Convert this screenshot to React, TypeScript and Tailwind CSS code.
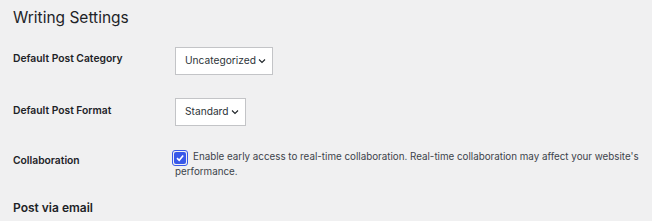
import React from 'react';

const Chevron = () => (
  <svg width="10" height="10" viewBox="0 0 10 10" className="ml-[1px]">
    <path d="M2 3.5 L5 6.5 L8 3.5" fill="none" stroke="#1d2327" strokeWidth="1.1" />
  </svg>
);

const SelectBox = ({ value }: { value: string }) => (
  <div className="inline-flex h-[28px] items-center border border-[#c3c4c7] bg-white pl-[9px] pr-[5px] text-[10.2px] text-[#2c3338]">
    <span>{value}</span>
    <Chevron />
  </div>
);

export default function App() {
  return (
    <div className="h-[221px] w-[652px] overflow-hidden bg-[#f0f0f1] pl-[13px] font-['Inter',sans-serif] text-[#1d2327]">
      <h1 className="pt-[6px] text-[15.5px] leading-[24px] font-normal">Writing Settings</h1>

      <div className="mt-[17px] flex items-start">
        <div className="w-[162px] pt-[4px] text-[10.3px] leading-[14px] font-semibold">Default Post Category</div>
        <SelectBox value="Uncategorized" />
      </div>

      <div className="mt-[23px] flex items-start">
        <div className="w-[162px] pt-[5px] text-[10.3px] leading-[14px] font-semibold">Default Post Format</div>
        <SelectBox value="Standard" />
      </div>

      <div className="mt-[21px] flex items-start">
        <div className="w-[162px] pt-[6px] text-[10.3px] leading-[14px] font-semibold">Collaboration</div>
        <div className="w-[475px] text-[9.8px] leading-[15px] text-[#3c434a]">
          <span className="-ml-[3px] mr-[5px] inline-flex h-[16px] w-[16px] translate-y-[3px] items-center justify-center rounded-[3px] border-[1.5px] border-[#3858e9]">
            <span className="flex h-[12px] w-[12px] items-center justify-center rounded-[2px] bg-[#3858e9]">
              <svg width="10" height="10" viewBox="0 0 10 10">
                <path d="M2 5.2 L4.2 7.3 L8.2 2.6" fill="none" stroke="white" strokeWidth="1.6" />
              </svg>
            </span>
          </span>
          Enable early access to real-time collaboration. Real-time collaboration may affect your website's performance.
        </div>
      </div>

      <h2 className="mt-[21px] text-[12px] leading-[16px] font-semibold">Post via email</h2>
    </div>
  );
}
